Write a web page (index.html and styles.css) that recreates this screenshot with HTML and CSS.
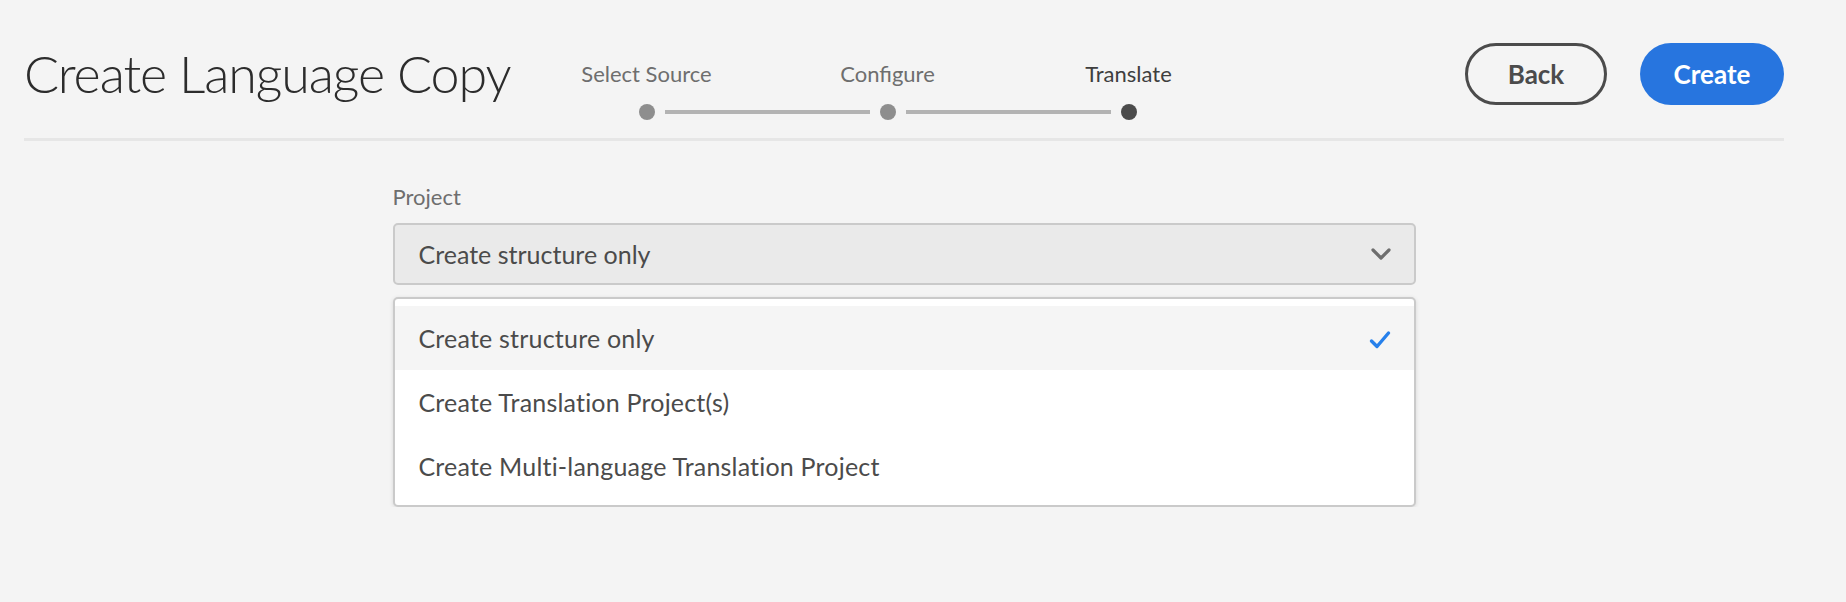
FILE: index.html
```html
<!DOCTYPE html>
<html lang="en">
<head>
<meta charset="utf-8">
<title>Create Language Copy</title>
<link rel="stylesheet" href="styles.css">
</head>
<body>
<div class="page">
  <header class="header">
    <div class="title-box"><h1 class="title">Create Language Copy</h1></div>
    <ol class="stepper">
      <li class="step step-done step-first">
        <span class="step-label">Select Source</span>
        <span class="track"><span class="line"></span><span class="dot"></span><span class="line"></span></span>
      </li>
      <li class="step step-done">
        <span class="step-label">Configure</span>
        <span class="track"><span class="line"></span><span class="dot"></span><span class="line"></span></span>
      </li>
      <li class="step step-current step-last">
        <span class="step-label">Translate</span>
        <span class="track"><span class="line"></span><span class="dot"></span><span class="line"></span></span>
      </li>
    </ol>
    <div class="actions">
      <button class="btn btn-secondary">Back</button>
      <button class="btn btn-primary">Create</button>
    </div>
  </header>
  <main class="main">
    <div class="field">
      <label class="field-label">Project</label>
      <div class="select">
        <span class="select-value">Create structure only</span>
        <svg class="chevron" width="20" height="12" viewBox="0 0 20 12"><path d="M2 2 L10 10 L18 2" fill="none" stroke="#6e6e6e" stroke-width="3.2" stroke-linecap="round" stroke-linejoin="round"/></svg>
      </div>
      <ul class="menu">
        <li class="menu-item menu-item-selected">
          <span>Create structure only</span>
          <svg class="check" width="22" height="20" viewBox="0 0 22 20"><path d="M2.5 11 L8 16.5 L19.5 3" fill="none" stroke="#2680eb" stroke-width="3.4" stroke-linecap="round" stroke-linejoin="round"/></svg>
        </li>
        <li class="menu-item"><span>Create Translation Project(s)</span></li>
        <li class="menu-item"><span>Create Multi-language Translation Project</span></li>
      </ul>
    </div>
  </main>
</div>
</body>
</html>
```

FILE: styles.css
```css
* { box-sizing: border-box; }

html, body {
  margin: 0;
  padding: 0;
  background: #f4f4f4;
  font-family: Lato, "Open Sans", "Noto Sans", sans-serif;
  color: #4b4b4b;
}

.page {
  padding: 0 62px 0 24px;
}

.header {
  display: flex;
  align-items: flex-start;
  height: 141px;
  padding-top: 43px;
  border-bottom: 3px solid #e6e6e6;
}

.title-box {
  flex: 0 0 502px;
  width: 502px;
  min-width: 0;
}

.title {
  margin: -1px 0 0 0;
  font-size: 52px;
  font-weight: 300;
  letter-spacing: -1.1px;
  line-height: 1.2;
  color: #2c2c2c;
  white-space: nowrap;
}

.stepper {
  display: flex;
  list-style: none;
  margin: 18px 0 0 0;
  padding: 0;
}

.step {
  width: 241px;
  display: flex;
  flex-direction: column;
  align-items: center;
}

.step-label {
  font-size: 22px;
  line-height: 26px;
  color: #6e6e6e;
}

.step-current .step-label {
  color: #3e3e3e;
}

.track {
  margin-top: 17px;
  display: flex;
  align-items: center;
  width: 100%;
}

.line {
  flex: 1;
  height: 4px;
  background: #b3b3b3;
}

.track .line:first-child { margin-right: 10px; }
.track .line:last-child { margin-left: 10px; }

.step-first .line:first-child,
.step-last .line:last-child {
  visibility: hidden;
}

.dot {
  width: 16px;
  height: 16px;
  border-radius: 50%;
  background: #8e8e8e;
}

.step-current .dot {
  background: #4b4b4b;
}

.actions {
  margin-left: auto;
  display: flex;
  gap: 33px;
}

.btn {
  height: 62px;
  border-radius: 31px;
  font-family: inherit;
  font-size: 26px;
  font-weight: 700;
  padding: 0;
  cursor: pointer;
}

.btn-secondary {
  width: 142px;
  background: transparent;
  border: 3px solid #4b4b4b;
  color: #4b4b4b;
}

.btn-primary {
  width: 144px;
  background: #2775df;
  border: none;
  color: #ffffff;
}

.main {
  display: flex;
  justify-content: center;
  padding-top: 43px;
}

.field {
  width: 1023px;
}

.field-label {
  display: block;
  font-size: 22px;
  line-height: 26px;
  color: #6e6e6e;
}

.select {
  margin-top: 13px;
  height: 62px;
  display: flex;
  align-items: center;
  justify-content: space-between;
  padding: 0 23px 0 24px;
  background: #eaeaea;
  border: 2px solid #cacaca;
  border-radius: 5px;
}

.select-value {
  font-size: 25px;
  color: #4b4b4b;
}

.menu {
  list-style: none;
  margin: 12px 0 0 0;
  padding: 7px 0;
  background: #ffffff;
  border: 2px solid #cacaca;
  border-radius: 5px;
  box-shadow: 0 1px 4px rgba(0, 0, 0, 0.12);
}

.menu-item {
  height: 64px;
  display: flex;
  align-items: center;
  justify-content: space-between;
  padding: 0 23px 0 24px;
  font-size: 25px;
  letter-spacing: 0.2px;
  color: #4b4b4b;
}

.menu-item-selected {
  background: #f5f5f5;
}

.check {
  margin-top: 4px;
}
```
